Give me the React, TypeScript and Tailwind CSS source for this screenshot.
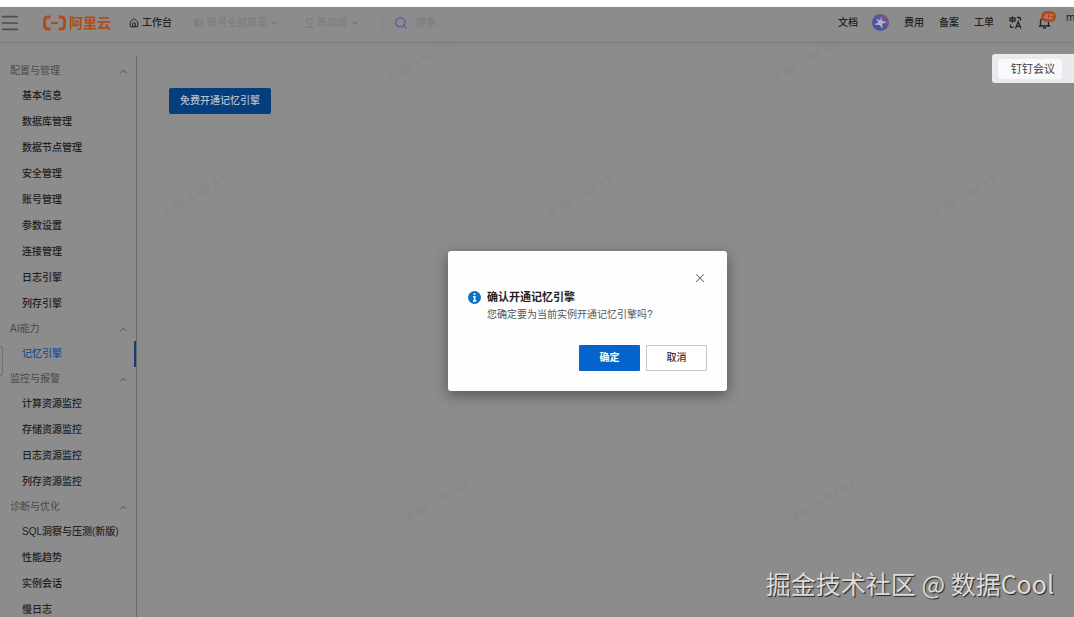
import React from 'react';
import { ChevronDown, ChevronUp, Search, X, House, Menu } from 'lucide-react';

interface MenuGroup {
  title: string;
  items: string[];
}

const MENU: MenuGroup[] = [
  {
    title: '配置与管理',
    items: ['基本信息', '数据库管理', '数据节点管理', '安全管理', '账号管理', '参数设置', '连接管理', '日志引擎', '列存引擎'],
  },
  { title: 'AI能力', items: ['记忆引擎'] },
  { title: '监控与报警', items: ['计算资源监控', '存储资源监控', '日志资源监控', '列存资源监控'] },
  { title: '诊断与优化', items: ['SQL洞察与压测(新版)', '性能趋势', '实例会话', '慢日志'] },
];

const ACTIVE_ITEM = '记忆引擎';

// Faint diagonal marks repeated over the page
const MARKS = [
  { x: 420, y: 60 },
  { x: 805, y: 60 },
  { x: 195, y: 195 },
  { x: 580, y: 195 },
  { x: 965, y: 195 },
  { x: 438, y: 500 },
  { x: 823, y: 500 },
];

const App: React.FC = () => (
  <div className="relative flex h-screen flex-col overflow-hidden bg-white pt-[7px] font-['Liberation_Sans','Noto_Sans_CJK_SC',sans-serif] text-[10px] leading-4 text-[#1f1f1f]">
    <div className="flex min-h-0 flex-1 flex-col bg-[#8c8c8c]">
      <TopBar />
      <div className="flex min-h-0 flex-1 pt-[15px]">
        <Sidebar />
        <main className="flex-1 px-8 pt-8">
          <button className="h-[26px] w-[102px] rounded-[2px] bg-[#063d7c] font-medium text-[#b4c1d1]">免费开通记忆引擎</button>
        </main>
      </div>
    </div>
    <PageMarks />
    <ConfirmDialog />
    <div className="absolute top-[54px] right-0 flex h-[29px] w-[82px] items-center rounded-l-[3px] bg-[#e9eaed] pl-1.5">
      <button className="h-5 w-16 rounded-[3px] bg-[#f8f9fa] pl-1.5 text-[11px] text-[#3a3a3a]">钉钉会议</button>
    </div>
    <p className="absolute right-5 bottom-[18px] font-['Noto_Sans_CJK_SC',sans-serif] text-[25px] leading-8 whitespace-nowrap text-[#dcdcdc] [text-shadow:1px_1px_1px_#222]">
      掘金技术社区 @ 数据Cool
    </p>
  </div>
);

const TopBar: React.FC = () => (
  <header className="flex h-[34px] shrink-0 items-center pb-[3px] shadow-[0_2px_3px_#7e7e7e]">
    <button aria-label="菜单" className="w-[42px] text-[#4c4c4c]">
      <Menu size={22} strokeWidth={1.8} className="-ml-px" />
    </button>
    <a href="#" className="flex w-[87px] items-center gap-0.5 text-[14px] font-bold text-[#b04c1c]">
      <AliyunLogo />
      阿里云
    </a>
    <a href="#" className="flex w-[65px] items-center gap-[3px] font-medium">
      <House size={10} strokeWidth={2.4} />
      工作台
    </a>
    <button className="flex w-[111px] items-center gap-1 text-[#7b7b7b]">
      <svg width="9" height="10" viewBox="0 0 9 10" fill="none" stroke="currentColor">
        <path d="M.5 1.5h8v7h-8zM.5 4h8M.5 6.2h8M3.2 1.5v7" />
      </svg>
      账号全部资源
      <ChevronDown size={10} strokeWidth={2.4} className="-ml-0.5 text-[#6c6c6c]" />
    </button>
    <button className="flex w-[77px] items-center gap-[3px] text-[#7b7b7b]">
      <svg width="9" height="10" viewBox="0 0 9 10" fill="none" stroke="currentColor">
        <path d="M2 1h5v3.5L4.500 7 2 4.500zM.5 9h8" />
      </svg>
      新加坡
      <ChevronDown size={10} strokeWidth={2.4} className="text-[#6c6c6c]" />
    </button>
    <label className="flex h-7 flex-1 items-center gap-2 border-l border-[#878787] pl-[11px]">
      <Search size={14} strokeWidth={1.8} className="text-[#50509a]" />
      <input type="text" aria-label="搜索" placeholder="搜索..." className="min-w-0 flex-1 bg-transparent outline-none placeholder:text-[#7b7b7b]" />
    </label>
    <nav className="flex shrink-0 items-center font-medium">
      <a href="#" className="w-[34px]">文档</a>
      <a href="#" aria-label="AI助手" className="w-8">
        <AssistantIcon />
      </a>
      <a href="#" className="w-[35px]">费用</a>
      <a href="#" className="w-[35px]">备案</a>
      <a href="#" className="w-[35px]">工单</a>
      <a href="#" aria-label="语言" className="w-[29px]">
        <LanguageIcon />
      </a>
      <a href="#" aria-label="消息" className="relative w-7">
        <BellIcon />
        <span className="absolute -top-[5px] left-[3px] h-[11px] w-[15px] rounded-full bg-[#ae4c1f] text-center text-[8px] leading-[11px] text-[#c9a48f]">42</span>
      </a>
      <span className="w-2 overflow-hidden pb-3 text-[11px] font-normal">m</span>
    </nav>
  </header>
);

const Sidebar: React.FC = () => (
  <nav className="relative w-[137px] shrink-0 overflow-hidden border-r border-[#686868] pt-[3px]">
    {MENU.map(group => (
      <section key={group.title}>
        <button className="flex h-6 w-full items-center justify-between pr-[7px] pl-[10px] text-[#4a4a4a]">
          {group.title}
          <ChevronUp size={11} strokeWidth={2} />
        </button>
        {group.items.map(item => (
          <a
            key={item}
            href="#"
            className={`flex h-[26px] items-center pl-[22px] font-medium whitespace-nowrap ${
              item === ACTIVE_ITEM ? 'border-r-2 border-[#123f78] text-[#174f94]' : ''
            }`}
          >
            {item}
          </a>
        ))}
      </section>
    ))}
    <span className="absolute top-[290px] left-0 h-[30px] w-[3px] rounded-r-[3px] border border-l-0 border-[#707070]" />
  </nav>
);

const ConfirmDialog: React.FC = () => (
  <div className="absolute inset-0 flex items-center justify-center pt-6 pl-[101px]">
    <div role="dialog" aria-labelledby="confirm-title" className="flex w-[279px] flex-col rounded-[3px] bg-[#fefefe] p-5 shadow-[0_4px_14px_#00000066]">
      <button aria-label="关闭" className="self-end text-[#666]">
        <X size={14} strokeWidth={1.8} />
      </button>
      <div className="mt-[3px] flex gap-1.5">
        <InfoIcon />
        <div>
          <h2 id="confirm-title" className="text-[11px] leading-[18px] font-bold text-[#222]">确认开通记忆引擎</h2>
          <p className="leading-[18px] text-[#555]">您确定要为当前实例开通记忆引擎吗?</p>
        </div>
      </div>
      <div className="mt-[21px] flex justify-end gap-1.5">
        <button className="h-[26px] w-[61px] rounded-[1px] bg-[#0464cb] font-bold text-white">确定</button>
        <button className="h-[26px] w-[61px] rounded-[1px] border border-[#c4c4c4] bg-white font-medium text-[#333]">取消</button>
      </div>
    </div>
  </div>
);

const PageMarks: React.FC = () => (
  <svg className="pointer-events-none absolute inset-0 h-full w-full" fill="none" stroke="#868686" strokeWidth="7" strokeDasharray="6 3 9 2 4 4">
    {MARKS.map(mark => (
      <path key={`${mark.x}-${mark.y}`} opacity="0.5" d={`M${mark.x - 30} ${mark.y + 18}l60 -36`} />
    ))}
  </svg>
);

const AliyunLogo: React.FC = () => (
  <svg width="25" height="16" viewBox="0 0 25 16" fill="none" stroke="currentColor">
    <path strokeWidth="3" d="M8.500 2H6Q2.500 2 2.500 5.500v5Q2.500 14 6 14H8.500" />
    <path strokeWidth="3" d="M16.500 2H19Q22.500 2 22.500 5.500v5q0 3.500-3.500 3.500H16.500" />
    <path strokeWidth="2" d="M9 8h7" />
  </svg>
);

const AssistantIcon: React.FC = () => (
  <svg width="17" height="17" viewBox="0 0 16 16">
    <defs>
      <linearGradient id="assistant" x1="0" y1="1" x2="1" y2="0">
        <stop offset="10%" stopColor="#3c56a8" />
        <stop offset="55%" stopColor="#5a519c" />
        <stop offset="100%" stopColor="#94557c" />
      </linearGradient>
    </defs>
    <circle cx="8" cy="8" r="8" fill="url(#assistant)" />
    <path d="M9 2l.3 4.200 4.700 1.600-4.400 1.300.2 4.900-2.600-3.600-5.200-.4 3.900-2.200-1.900-3.600 3.500 1.700z" fill="#b0b0c8" />
  </svg>
);

const LanguageIcon: React.FC = () => (
  <svg width="13" height="13" viewBox="0 0 13 13" fill="none" stroke="currentColor" strokeWidth="1.300">
    <path d="M1 2.200h5v2.600H1zM3.500.5v6.200M8 1.500h2.500q1 0 1 1V4.500M1.500 8.500v1.800q0 1 1 1H4.500M6.500 12.500l2.700-6.800 2.700 6.800M7.400 10.300h3.600" />
  </svg>
);

const BellIcon: React.FC = () => (
  <svg width="13" height="13" viewBox="0 0 13 13" fill="none" stroke="currentColor" strokeWidth="1.300">
    <path d="M2.500 9.500V5.500q0-3.500 4-3.500t4 3.500v4M.8 10h11.400M5 12h3" />
  </svg>
);

const InfoIcon: React.FC = () => (
  <svg className="mt-[3px] shrink-0" width="13" height="13" viewBox="0 0 13 13">
    <circle cx="6.500" cy="6.500" r="6.500" fill="#0a72c9" />
    <path d="M6.500 2.200v1.900M5 5.800h1.700v4M4.900 10h3.400" fill="none" stroke="#fff" strokeWidth="1.600" />
  </svg>
);

export default App;
